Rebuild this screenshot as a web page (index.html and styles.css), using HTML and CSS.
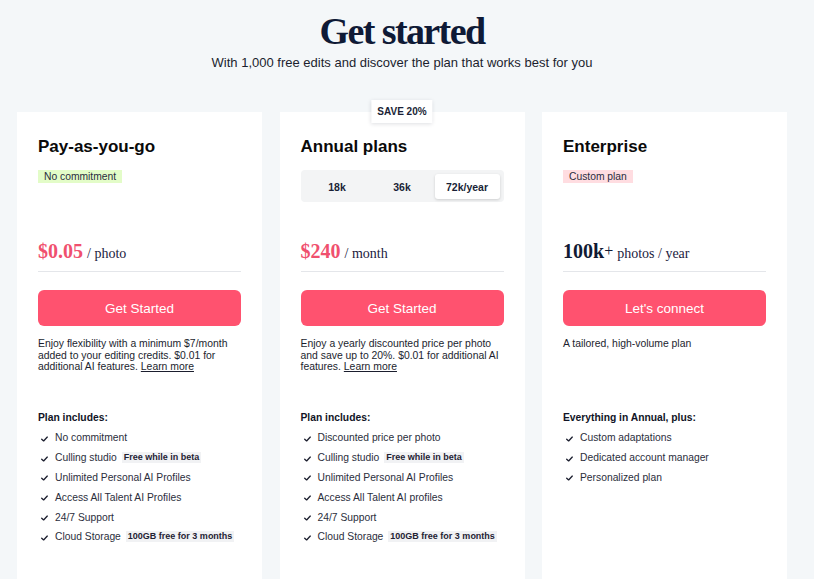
FILE: index.html
```html
<!DOCTYPE html>
<html lang="en">
<head>
<meta charset="utf-8">
<title>Get started</title>
<link rel="stylesheet" href="styles.css">
</head>
<body>
<div class="page">
  <header class="hero">
    <h1 class="hero-title">Get started</h1>
    <p class="hero-sub">With 1,000 free edits and discover the plan that works best for you</p>
  </header>

  <section class="plans">
    <article class="card">
      <div class="head">
        <h2 class="plan-name">Pay-as-you-go</h2>
        <span class="badge badge-green">No commitment</span>
      </div>
      <div class="price"><span class="amount">$0.05</span> <span class="unit">/ photo</span></div>
      <a class="btn" href="#">Get Started</a>
      <p class="desc">Enjoy flexibility with a minimum $7/month added to your editing credits. $0.01 for additional AI features. <a href="#" class="link">Learn more</a></p>
      <h3 class="inc-title">Plan includes:</h3>
      <ul class="features">
        <li><svg class="chk" viewBox="0 0 8 6"><path d="M0.8 3.2 L3 5.2 L7.2 0.8"/></svg>No commitment</li>
        <li><svg class="chk" viewBox="0 0 8 6"><path d="M0.8 3.2 L3 5.2 L7.2 0.8"/></svg>Culling studio<span class="tag">Free while in beta</span></li>
        <li><svg class="chk" viewBox="0 0 8 6"><path d="M0.8 3.2 L3 5.2 L7.2 0.8"/></svg>Unlimited Personal AI Profiles</li>
        <li><svg class="chk" viewBox="0 0 8 6"><path d="M0.8 3.2 L3 5.2 L7.2 0.8"/></svg>Access All Talent AI Profiles</li>
        <li><svg class="chk" viewBox="0 0 8 6"><path d="M0.8 3.2 L3 5.2 L7.2 0.8"/></svg>24/7 Support</li>
        <li><svg class="chk" viewBox="0 0 8 6"><path d="M0.8 3.2 L3 5.2 L7.2 0.8"/></svg>Cloud Storage<span class="tag">100GB free for 3 months</span></li>
      </ul>
    </article>

    <article class="card card-featured">
      <span class="save">SAVE 20%</span>
      <div class="head">
        <h2 class="plan-name">Annual plans</h2>
        <div class="toggle">
          <span class="seg">18k</span>
          <span class="seg">36k</span>
          <span class="seg seg-active">72k/year</span>
        </div>
      </div>
      <div class="price"><span class="amount">$240</span> <span class="unit">/ month</span></div>
      <a class="btn" href="#">Get Started</a>
      <p class="desc">Enjoy a yearly discounted price per photo and save up to 20%. $0.01 for additional AI features. <a href="#" class="link">Learn more</a></p>
      <h3 class="inc-title">Plan includes:</h3>
      <ul class="features">
        <li><svg class="chk" viewBox="0 0 8 6"><path d="M0.8 3.2 L3 5.2 L7.2 0.8"/></svg>Discounted price per photo</li>
        <li><svg class="chk" viewBox="0 0 8 6"><path d="M0.8 3.2 L3 5.2 L7.2 0.8"/></svg>Culling studio<span class="tag">Free while in beta</span></li>
        <li><svg class="chk" viewBox="0 0 8 6"><path d="M0.8 3.2 L3 5.2 L7.2 0.8"/></svg>Unlimited Personal AI Profiles</li>
        <li><svg class="chk" viewBox="0 0 8 6"><path d="M0.8 3.2 L3 5.2 L7.2 0.8"/></svg>Access All Talent AI profiles</li>
        <li><svg class="chk" viewBox="0 0 8 6"><path d="M0.8 3.2 L3 5.2 L7.2 0.8"/></svg>24/7 Support</li>
        <li><svg class="chk" viewBox="0 0 8 6"><path d="M0.8 3.2 L3 5.2 L7.2 0.8"/></svg>Cloud Storage<span class="tag">100GB free for 3 months</span></li>
      </ul>
    </article>

    <article class="card">
      <div class="head">
        <h2 class="plan-name">Enterprise</h2>
        <span class="badge badge-pink">Custom plan</span>
      </div>
      <div class="price"><span class="amount amount-dark">100k</span><span class="plus">+</span> <span class="unit">photos / year</span></div>
      <a class="btn" href="#">Let's connect</a>
      <p class="desc">A tailored, high-volume plan</p>
      <h3 class="inc-title">Everything in Annual, plus:</h3>
      <ul class="features">
        <li><svg class="chk" viewBox="0 0 8 6"><path d="M0.8 3.2 L3 5.2 L7.2 0.8"/></svg>Custom adaptations</li>
        <li><svg class="chk" viewBox="0 0 8 6"><path d="M0.8 3.2 L3 5.2 L7.2 0.8"/></svg>Dedicated account manager</li>
        <li><svg class="chk" viewBox="0 0 8 6"><path d="M0.8 3.2 L3 5.2 L7.2 0.8"/></svg>Personalized plan</li>
      </ul>
    </article>
  </section>
</div>
</body>
</html>
```

FILE: styles.css
```css
* { box-sizing: border-box; }

html, body {
  margin: 0;
  padding: 0;
  background: #f4f7f9;
  font-family: "Liberation Sans", Arial, sans-serif;
  color: #1b1e2e;
  overflow: hidden;
}

.page {
  width: 770px;
  margin-left: 17px;
}

.hero {
  text-align: center;
  padding-top: 12px;
}

.hero-title {
  margin: 0;
  font-family: "Liberation Serif", "Times New Roman", serif;
  font-weight: 700;
  font-size: 38px;
  line-height: 38px;
  letter-spacing: -1.6px;
  color: #0f1a36;
}

.hero-sub {
  margin: 5px 0 0;
  font-size: 13px;
  line-height: 16px;
  color: #1b1e2e;
}

.plans {
  margin-top: 41px;
  display: grid;
  grid-template-columns: repeat(3, 245px);
  column-gap: 17.5px;
}

.card {
  position: relative;
  background: #ffffff;
  padding: 25px 21px 40px;
  display: flex;
  flex-direction: column;
}

.head {
  height: 102px;
  display: flex;
  flex-direction: column;
  align-items: flex-start;
}

.plan-name {
  margin: 0;
  font-size: 17px;
  line-height: 20px;
  font-weight: 700;
  color: #0a0a0a;
}

.badge {
  margin-top: 13px;
  font-size: 10.3px;
  line-height: 13px;
  padding: 0 6px;
  color: #2a2d3e;
}
.badge-green { background: #e3fcc8; }
.badge-pink { background: #ffdde1; }

.save {
  position: absolute;
  top: -12px;
  left: 50%;
  transform: translateX(-50%);
  background: #ffffff;
  box-shadow: 0 1px 4px rgba(20, 30, 50, 0.14);
  font-size: 10px;
  font-weight: 700;
  line-height: 23px;
  padding: 0 6px;
  color: #1a1f36;
  white-space: nowrap;
}

.toggle {
  margin-top: 13px;
  width: 100%;
  height: 32px;
  background: #f3f4f5;
  border-radius: 4px;
  padding: 4px 4px 3px;
  display: grid;
  grid-template-columns: repeat(3, 1fr);
}

.seg {
  display: flex;
  align-items: center;
  justify-content: center;
  font-size: 10.5px;
  font-weight: 700;
  color: #1a1f36;
  border-radius: 3px;
}

.seg-active {
  background: #ffffff;
  box-shadow: 0 1px 3px rgba(0, 0, 0, 0.16);
}

.price {
  font-family: "Liberation Serif", "Times New Roman", serif;
  line-height: 24px;
  padding-bottom: 5px;
  border-bottom: 1px solid #e4e6ea;
  color: #1b2140;
}

.amount {
  font-size: 20px;
  font-weight: 700;
  color: #f0506e;
}

.amount-dark { color: #111a33; }

.plus {
  font-size: 16px;
  color: #111a33;
  vertical-align: 2px;
}

.unit {
  font-size: 14px;
}

.btn {
  margin-top: 18px;
  height: 36px;
  border-radius: 6px;
  background: #ff526f;
  color: #ffffff;
  text-decoration: none;
  font-size: 13.5px;
  display: flex;
  align-items: center;
  justify-content: center;
}

.desc {
  margin: 12px 0 0;
  min-height: 74px;
  font-size: 10.4px;
  line-height: 11.7px;
  color: #1b1e2e;
}

.link {
  color: #1b1e2e;
  text-decoration: underline;
}

.inc-title {
  margin: 0;
  font-size: 10.3px;
  line-height: 12px;
  font-weight: 700;
  color: #111426;
}

.features {
  list-style: none;
  margin: 4px 0 0;
  padding: 0;
}

.features li {
  display: flex;
  align-items: center;
  height: 19.8px;
  font-size: 10.3px;
  color: #2b2e3c;
}

.chk {
  width: 7px;
  height: 6px;
  margin: 2px 7px 0 3px;
  flex: none;
  fill: none;
  stroke: #1b1e2e;
  stroke-width: 1.5;
  stroke-linecap: round;
  stroke-linejoin: round;
}

.tag {
  margin-left: 5px;
  background: #f1f2f4;
  font-size: 9px;
  font-weight: 700;
  line-height: 11px;
  padding: 0 2px;
  color: #1f2233;
}
```
